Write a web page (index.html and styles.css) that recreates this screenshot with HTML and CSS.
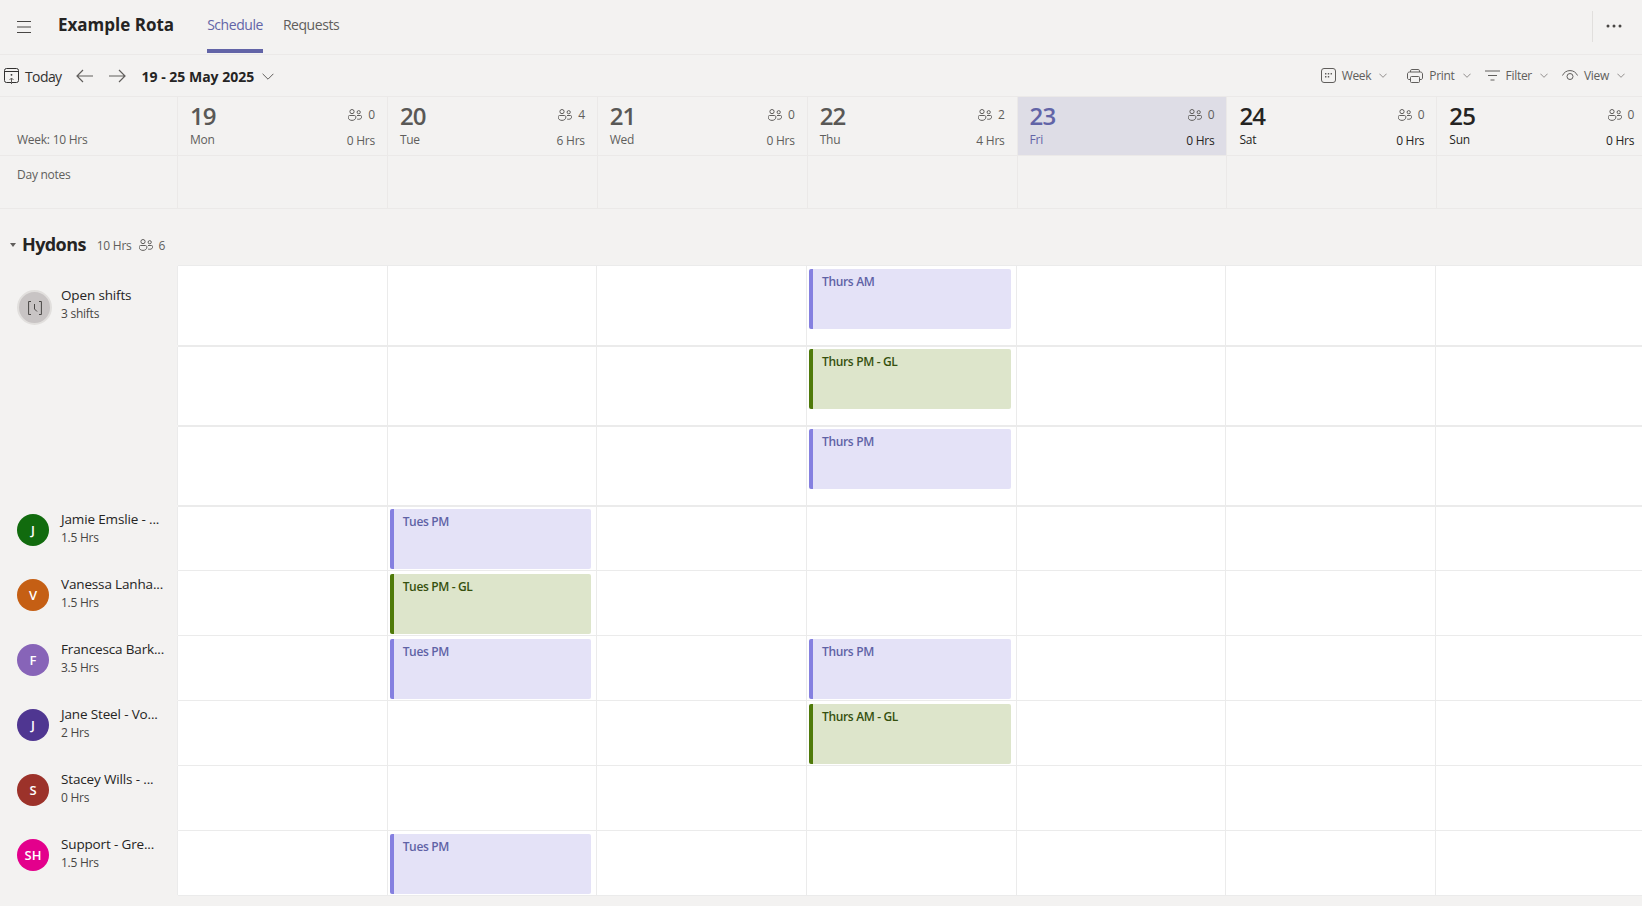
FILE: index.html
```html
<!DOCTYPE html>
<html lang="en">
<head>
<meta charset="utf-8">
<title>Example Rota</title>
<link rel="stylesheet" href="styles.css">
</head>
<body>
<svg class="defs" width="0" height="0" aria-hidden="true">
  <symbol id="people" viewBox="0 0 14 12">
    <g fill="none" stroke="currentColor" stroke-width="1">
      <circle cx="4" cy="2.6" r="2.1"/>
      <circle cx="10.7" cy="3.2" r="1.6"/>
      <path d="M1.6 6.500h4.800c.9 0 1.500.7 1.500 1.500 0 1.900-1.500 3.400-3.900 3.400S.1 9.900.1 8c0-.8.6-1.500 1.500-1.500z"/>
      <path d="M9 6.500h3.400c.8 0 1.300.5 1.300 1.200 0 1.600-1.200 2.600-3.100 2.600-.5 0-1-.1-1.400-.2"/>
    </g>
  </symbol>
  <symbol id="chev" viewBox="0 0 12 7">
    <path d="M.6.8 6 6.200 11.400.8" fill="none" stroke="currentColor" stroke-width="1"/>
  </symbol>
</svg>

<header class="topbar">
  <svg class="burger" width="14" height="12" viewBox="0 0 14 12"><path d="M0 .5h14M0 6h14M0 11.500h14" stroke="#484644" stroke-width="1" fill="none"/></svg>
  <h1 class="title">Example Rota</h1>
  <nav class="tabs">
    <a class="tab tab-active">Schedule</a>
    <a class="tab">Requests</a>
  </nav>
  <div class="more"><svg width="16" height="4" viewBox="0 0 16 4"><circle cx="2" cy="2" r="1.500" fill="#484644"/><circle cx="8" cy="2" r="1.500" fill="#484644"/><circle cx="14" cy="2" r="1.500" fill="#484644"/></svg></div>
</header>

<section class="toolbar">
  <svg class="today-ico" width="15" height="16" viewBox="0 0 15 16"><g fill="none" stroke="#323130"><rect x=".5" y=".5" width="14" height="14" rx="2"/><path d="M.5 3.500h14"/><path d="M7.500 16V10M5.500 12l2-2 2 2" stroke="#605e5c"/></g><circle cx="7.500" cy="6.800" r=".9" fill="#323130"/></svg>
  <span class="today">Today</span>
  <svg class="arrow arrow-l" width="17" height="14" viewBox="0 0 17 14"><path d="M7 1 1 7l6 6M1 7h16" fill="none" stroke="#605e5c" stroke-width="1.200"/></svg>
  <svg class="arrow arrow-r" width="17" height="14" viewBox="0 0 17 14"><path d="m10 1 6 6-6 6M16 7H0" fill="none" stroke="#605e5c" stroke-width="1.200"/></svg>
  <strong class="range">19 - 25 May 2025</strong>
  <svg class="range-chev"><use href="#chev"/></svg>
  <div class="actions">
    <button class="act act-week">
      <svg class="act-ico" width="15" height="15" viewBox="0 0 15 15"><rect x=".5" y=".5" width="14" height="14" rx="2.500" fill="none" stroke="#605e5c"/><path d="M4 5h1.400v1.400H4zM6.800 5h1.400v1.400H6.800zM9.600 5H11v1.400H9.600zM4 8h1.400v1.400H4zM6.800 8h1.400v1.400H6.800z" fill="#605e5c"/></svg>
      <span>Week</span><svg class="act-chev"><use href="#chev"/></svg>
    </button>
    <button class="act act-print">
      <svg class="act-ico" width="16" height="14" viewBox="0 0 16 14"><g fill="none" stroke="#605e5c"><path d="M3.500 3V1.800C3.500 1 4 .5 4.800.5h6.400c.8 0 1.300.5 1.300 1.300V3"/><path d="M3.500 10.500H2c-.9 0-1.500-.6-1.500-1.500V5c0-1.100.9-2 2-2h11c1.100 0 2 .9 2 2v4c0 .9-.6 1.500-1.500 1.500h-1.500"/><rect x="3.500" y="7.500" width="9" height="6" rx="1"/></g></svg>
      <span>Print</span><svg class="act-chev"><use href="#chev"/></svg>
    </button>
    <button class="act act-filter">
      <svg class="act-ico" width="15" height="11" viewBox="0 0 15 11"><path d="M0 1h15M3 5.500h9M5.500 10h4" fill="none" stroke="#605e5c"/></svg>
      <span>Filter</span><svg class="act-chev"><use href="#chev"/></svg>
    </button>
    <button class="act act-view">
      <svg class="act-ico" width="16" height="11" viewBox="0 0 16 11"><g fill="none" stroke="#605e5c"><path d="M.5 5.500C2 2.300 4.700.6 8 .6s6 1.700 7.500 4.900"/><circle cx="8" cy="6.500" r="3"/></g></svg>
      <span>View</span><svg class="act-chev"><use href="#chev"/></svg>
    </button>
  </div>
</section>

<section class="days">
  <div class="corner"><span class="week-total">Week: 10 Hrs</span></div>
  <div class="day day-past">
    <div class="day-top"><span class="num">19</span><span class="count"><svg class="ppl"><use href="#people"/></svg>0</span></div>
    <div class="day-bot"><span>Mon</span><span>0 Hrs</span></div>
  </div>
  <div class="day day-past">
    <div class="day-top"><span class="num">20</span><span class="count"><svg class="ppl"><use href="#people"/></svg>4</span></div>
    <div class="day-bot"><span>Tue</span><span>6 Hrs</span></div>
  </div>
  <div class="day day-past">
    <div class="day-top"><span class="num">21</span><span class="count"><svg class="ppl"><use href="#people"/></svg>0</span></div>
    <div class="day-bot"><span>Wed</span><span>0 Hrs</span></div>
  </div>
  <div class="day day-past">
    <div class="day-top"><span class="num">22</span><span class="count"><svg class="ppl"><use href="#people"/></svg>2</span></div>
    <div class="day-bot"><span>Thu</span><span>4 Hrs</span></div>
  </div>
  <div class="day day-today">
    <div class="day-top"><span class="num">23</span><span class="count"><svg class="ppl"><use href="#people"/></svg>0</span></div>
    <div class="day-bot"><span class="day-name">Fri</span><span>0 Hrs</span></div>
  </div>
  <div class="day">
    <div class="day-top"><span class="num">24</span><span class="count"><svg class="ppl"><use href="#people"/></svg>0</span></div>
    <div class="day-bot"><span>Sat</span><span>0 Hrs</span></div>
  </div>
  <div class="day">
    <div class="day-top"><span class="num">25</span><span class="count"><svg class="ppl"><use href="#people"/></svg>0</span></div>
    <div class="day-bot"><span>Sun</span><span>0 Hrs</span></div>
  </div>
</section>

<section class="notes">
  <div class="corner"><span class="notes-label">Day notes</span></div>
  <div class="note"></div><div class="note"></div><div class="note"></div><div class="note"></div><div class="note"></div><div class="note"></div><div class="note"></div>
</section>

<section class="group">
  <span class="caret"></span>
  <h2 class="group-name">Hydons</h2>
  <span class="group-hrs">10 Hrs</span>
  <svg class="ppl group-ppl"><use href="#people"/></svg>
  <span class="group-count">6</span>
</section>

<section class="roster">
  <div class="row row-open-a">
    <div class="who who-open">
      <span class="avatar avatar-open"><svg width="14" height="14" viewBox="0 0 14 14"><path d="M3 .5H.6v13H3M11 .5h2.400v13H11" fill="none" stroke="#484644"/><path d="M6.500 3v5l2.500 2.500" fill="none" stroke="#484644"/></svg></span>
      <div class="info"><div class="name">Open shifts</div><div class="hrs">3 shifts</div></div>
    </div>
    <div class="cells">
      <div class="cell"></div><div class="cell"></div><div class="cell"></div>
      <div class="cell"><div class="shift shift-blue">Thurs AM</div></div>
      <div class="cell"></div><div class="cell"></div><div class="cell"></div>
    </div>
  </div>
  <div class="row row-open-b">
    <div class="who"></div>
    <div class="cells">
      <div class="cell"></div><div class="cell"></div><div class="cell"></div>
      <div class="cell"><div class="shift shift-green">Thurs PM - GL</div></div>
      <div class="cell"></div><div class="cell"></div><div class="cell"></div>
    </div>
  </div>
  <div class="row row-open-b">
    <div class="who"></div>
    <div class="cells">
      <div class="cell"></div><div class="cell"></div><div class="cell"></div>
      <div class="cell"><div class="shift shift-blue">Thurs PM</div></div>
      <div class="cell"></div><div class="cell"></div><div class="cell"></div>
    </div>
  </div>
  <div class="row row-first">
    <div class="who">
      <span class="avatar av-green">J</span>
      <div class="info"><div class="name">Jamie Emslie - ...</div><div class="hrs">1.5 Hrs</div></div>
    </div>
    <div class="cells">
      <div class="cell"></div>
      <div class="cell"><div class="shift shift-blue">Tues PM</div></div>
      <div class="cell"></div><div class="cell"></div><div class="cell"></div><div class="cell"></div><div class="cell"></div>
    </div>
  </div>
  <div class="row">
    <div class="who">
      <span class="avatar av-orange">V</span>
      <div class="info"><div class="name">Vanessa Lanha...</div><div class="hrs">1.5 Hrs</div></div>
    </div>
    <div class="cells">
      <div class="cell"></div>
      <div class="cell"><div class="shift shift-green">Tues PM - GL</div></div>
      <div class="cell"></div><div class="cell"></div><div class="cell"></div><div class="cell"></div><div class="cell"></div>
    </div>
  </div>
  <div class="row">
    <div class="who">
      <span class="avatar av-violet">F</span>
      <div class="info"><div class="name">Francesca Bark...</div><div class="hrs">3.5 Hrs</div></div>
    </div>
    <div class="cells">
      <div class="cell"></div>
      <div class="cell"><div class="shift shift-blue">Tues PM</div></div>
      <div class="cell"></div>
      <div class="cell"><div class="shift shift-blue">Thurs PM</div></div>
      <div class="cell"></div><div class="cell"></div><div class="cell"></div>
    </div>
  </div>
  <div class="row">
    <div class="who">
      <span class="avatar av-indigo">J</span>
      <div class="info"><div class="name">Jane Steel - Vo...</div><div class="hrs">2 Hrs</div></div>
    </div>
    <div class="cells">
      <div class="cell"></div><div class="cell"></div><div class="cell"></div>
      <div class="cell"><div class="shift shift-green">Thurs AM - GL</div></div>
      <div class="cell"></div><div class="cell"></div><div class="cell"></div>
    </div>
  </div>
  <div class="row">
    <div class="who">
      <span class="avatar av-red">S</span>
      <div class="info"><div class="name">Stacey Wills - ...</div><div class="hrs">0 Hrs</div></div>
    </div>
    <div class="cells">
      <div class="cell"></div><div class="cell"></div><div class="cell"></div><div class="cell"></div><div class="cell"></div><div class="cell"></div><div class="cell"></div>
    </div>
  </div>
  <div class="row">
    <div class="who">
      <span class="avatar av-pink">SH</span>
      <div class="info"><div class="name">Support - Gre...</div><div class="hrs">1.5 Hrs</div></div>
    </div>
    <div class="cells">
      <div class="cell"></div>
      <div class="cell"><div class="shift shift-blue">Tues PM</div></div>
      <div class="cell"></div><div class="cell"></div><div class="cell"></div><div class="cell"></div><div class="cell"></div>
    </div>
  </div>
</section>
</body>
</html>
```

FILE: styles.css
```css
* { box-sizing: border-box; }
html, body { margin: 0; padding: 0; }
body {
  width: 1642px;
  height: 906px;
  overflow: hidden;
  background: #f3f2f1;
  color: #252423;
  font-family: "Open Sans", "Noto Sans", "Liberation Sans", sans-serif;
  font-size: 12px;
  letter-spacing: -0.25px;
}
.defs { position: absolute; }

/* top bar */
.topbar {
  display: flex;
  align-items: center;
  height: 55px;
  border-bottom: 1px solid #ebe9e8;
  padding-left: 17px;
}
.burger { flex: none; }
.title {
  margin: -4px 0 0 27px;
  font-size: 17px;
  line-height: 24px;
  font-weight: 700;
  color: #252423;
  letter-spacing: 0;
}
.tabs { display: flex; gap: 20px; margin-left: 33px; height: 54px; align-self: flex-start; }
.tab {
  display: block;
  height: 53px;
  padding-top: 15px;
  font-size: 14px;
  line-height: 20px;
  color: #605e5c;
  letter-spacing: -0.45px;
  border-bottom: 4px solid transparent;
}
.tab-active { color: #6264a7; border-bottom-color: #6264a7; }
.more {
  display: flex;
  align-items: center;
  height: 31px;
  margin-left: auto;
  padding: 0 20px 0 13px;
  border-left: 1px solid #e1dfdd;
  margin-top: -2px;
}

/* toolbar */
.toolbar {
  display: flex;
  align-items: center;
  height: 42px;
  border-bottom: 1px solid #ebe9e8;
  padding: 0 17px 0 4px;
}
.today-ico { flex: none; margin-top: 1px; }
.today { margin: 1px 0 0 6px; font-size: 14px; color: #323130; letter-spacing: -0.6px; }
.arrow { flex: none; margin-top: 1px; }
.arrow-l { margin-left: 14px; }
.arrow-r { margin-left: 16px; }
.range { margin: 1px 0 0 16px; font-size: 14px; font-weight: 700; color: #252423; letter-spacing: 0; }
.range-chev { width: 12px; height: 7px; margin: 1px 0 0 8px; color: #605e5c; flex: none; }
.actions { display: flex; align-items: center; margin-left: auto; }
.act {
  display: flex;
  align-items: center;
  padding: 0;
  border: 0;
  background: none;
  font: inherit;
  letter-spacing: -0.3px;
  color: #605e5c;
  line-height: 16px;
}
.act-ico { flex: none; margin-right: 6px; }
.act-chev { width: 8px; height: 5px; margin-left: 8px; color: #605e5c; flex: none; }
.act-print { margin-left: 20px; }
.act-filter { margin-left: 14px; }
.act-view { margin-left: 14px; }

/* day header */
.days, .notes { display: flex; width: 1660px; border-bottom: 1px solid #ebe9e8; }
.days { height: 59px; }
.notes { height: 53px; }
.corner {
  flex: none;
  width: 178px;
  padding-left: 17px;
  border-right: 1px solid #ebe9e8;
  color: #605e5c;
  line-height: 16px;
}
.week-total { display: block; padding-top: 35px; }
.notes-label { display: block; padding-top: 11px; }
.day {
  flex: none;
  width: 209.9px;
  padding: 3px 12px 0;
  border-right: 1px solid #ebe9e8;
  color: #252423;
}
.day-top, .day-bot { display: flex; justify-content: space-between; align-items: center; }
.day-top { height: 32px; }
.day-bot { height: 16px; line-height: 16px; }
.num { font-size: 24px; line-height: 32px; font-weight: 600; letter-spacing: -0.9px; }
.count { display: flex; align-items: center; margin-top: -3px; color: #605e5c; }
.ppl { width: 14px; height: 12px; color: #605e5c; flex: none; }
.count .ppl { margin-right: 6px; }
.day-bot span + span { margin-top: 2px; }
.day-past { color: #605e5c; }
.day-past .num { color: #595856; }
.day-today { background: #dedde6; }
.day-today .num, .day-today .day-name { color: #6264a7; }
.note { flex: none; width: 209.9px; border-right: 1px solid #ebe9e8; }

/* group heading */
.group {
  display: flex;
  align-items: center;
  height: 56px;
  padding: 13px 0 0 10px;
}
.caret {
  flex: none;
  width: 0;
  height: 0;
  margin-top: 3px;
  border-left: 3.500px solid transparent;
  border-right: 3.500px solid transparent;
  border-top: 4px solid #605e5c;
}
.group-name { margin: 0 0 0 6px; font-size: 18px; line-height: 24px; font-weight: 700; color: #252423; letter-spacing: -0.6px; }
.group-hrs { margin-left: 11px; color: #605e5c; margin-top: 3px; }
.group-ppl { margin-left: 7px; margin-top: 2px; }
.group-count { margin-left: 6px; color: #605e5c; margin-top: 3px; }

/* roster */
.roster { width: 1660px; }
.row { display: flex; height: 65px; }
.row-open-a { height: 82px; }
.row-open-b { height: 80px; }
.row-first { height: 64px; }
.who {
  flex: none;
  width: 178px;
  display: flex;
  align-items: flex-start;
  padding-left: 17px;
}
.avatar {
  flex: none;
  display: flex;
  align-items: center;
  justify-content: center;
  width: 32px;
  height: 32px;
  margin-top: 8px;
  border-radius: 50%;
  color: #fff;
  font-size: 13px;
  font-weight: 600;
  letter-spacing: 0;
}
.row-first .avatar { margin-top: 7px; }
.avatar-open { width: 35px; height: 35px; margin-top: 25px; background: #c8c4c4; border: 2px solid #e1dfdd; }
.av-green { background: #116b0e; }
.av-orange { background: #c55f14; }
.av-violet { background: #8764b8; }
.av-indigo { background: #4f3691; }
.av-red { background: #9c322a; }
.av-pink { background: #e3008c; }
.info { margin: 3px 0 0 12px; white-space: nowrap; }
.row-first .info { margin-top: 2px; }
.who-open .info { margin: 20px 0 0 9px; }
.name { font-size: 13.5px; line-height: 20px; height: 20px; color: #252423; letter-spacing: -0.15px; }
.hrs { margin-top: 1px; line-height: 16px; color: #484644; }

.cells {
  display: grid;
  grid-template-columns: repeat(7, 209.7px);
  flex: none;
  background: #fff;
  border-bottom: 1px solid #ebebeb;
}
.row-open-a .cells { border-top: 1px solid #ebebeb; border-bottom-width: 2px; }
.row-open-b .cells { border-bottom-width: 2px; }
.cell { border-right: 1px solid #ebebeb; padding: 3px 0 0 2px; min-height: 0; }
.row-open-b .cell, .row-first .cell { padding-top: 2px; }
.cells .cell:first-child { box-shadow: -1px 0 0 #ebebeb; }
.shift {
  width: 201.500px;
  height: 60px;
  border-radius: 2px;
  padding: 4px 8px 0 9px;
  border-left: 4px solid;
  font-weight: 600;
  line-height: 18px;
  letter-spacing: -0.35px;
}
.shift-blue { background: #e4e2f7; border-left-color: #8580e0; color: #5f62a6; }
.shift-green { background: #dde5cb; border-left-color: #4f7a0a; color: #35500e; }
```
